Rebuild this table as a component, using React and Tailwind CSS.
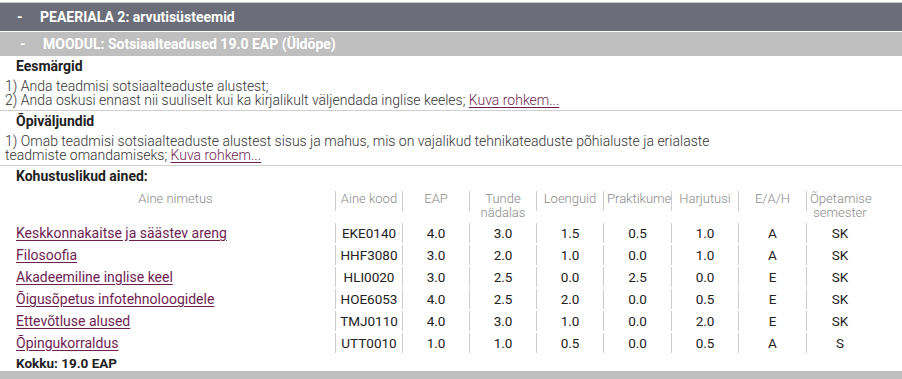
import React from "react";

const rows = [
  ["Keskkonnakaitse ja säästev areng", "EKE0140", "4.0", "3.0", "1.5", "0.5", "1.0", "A", "SK"],
  ["Filosoofia", "HHF3080", "3.0", "2.0", "1.0", "0.0", "1.0", "A", "SK"],
  ["Akadeemiline inglise keel", "HLI0020", "3.0", "2.5", "0.0", "2.5", "0.0", "E", "SK"],
  ["Õigusõpetus infotehnoloogidele", "HOE6053", "4.0", "2.5", "2.0", "0.0", "0.5", "E", "SK"],
  ["Ettevõtluse alused", "TMJ0110", "4.0", "3.0", "1.0", "0.0", "2.0", "E", "SK"],
  ["Õpingukorraldus", "UTT0010", "1.0", "1.0", "0.5", "0.0", "0.5", "A", "S"],
];

const heads = ["Aine kood", "EAP", "Tunde nädalas", "Loenguid", "Praktikume", "Harjutusi", "E/A/H", "Õpetamise semester"];
const widths = ["w-[67px]", "w-[67px]", "w-[67px]", "w-[67px]", "w-[68px]", "w-[67px]", "w-[68px]", "w-[67px]"];

function Link({ children }) {
  return <a href="#" className="text-[#6e1e52] underline underline-offset-[2px]">{children}</a>;
}

export default function App() {
  return (
    <div className="w-[902px] bg-white font-['Roboto',sans-serif] text-[14px] text-[#333]">
      <div className="h-[2px]" />
      <div className="h-[1px] bg-[#c8c8c8]" />
      <div className="h-[28px] bg-[#6b6e78] flex items-center text-white font-bold text-[14px] pl-[17px]">
        <span className="w-[23px]">-</span>
        <span>PEAERIALA 2: arvutisüsteemid</span>
      </div>
      <div className="h-[1px]" />
      <div className="h-[24px] bg-[#bfbfbf] flex items-center text-white font-bold text-[14px] pl-[20px]">
        <span className="w-[23px]">-</span>
        <span>MOODUL: Sotsiaalteadused 19.0 EAP (Üldõpe)</span>
      </div>

      <div className="pt-[2px] pb-[3px] border-b border-[#cfcfcf]">
        <div className="pl-[16px] font-bold leading-[16px] text-[#222]">Eesmärgid</div>
        <div className="mt-[5px] pl-[5px] leading-[14px] font-light text-[#333]">
          <div>1) Anda teadmisi sotsiaalteaduste alustest;</div>
          <div>
            2) Anda oskusi ennast nii suuliselt kui ka kirjalikult väljendada inglise keeles; <Link>Kuva rohkem...</Link>
          </div>
        </div>
      </div>

      <div className="pt-[2px] pb-[3px] border-b border-[#cfcfcf]">
        <div className="pl-[16px] font-bold leading-[16px] text-[#222]">Õpiväljundid</div>
        <div className="mt-[5px] pl-[5px] leading-[14px] font-light text-[#333] w-[735px]">
          1) Omab teadmisi sotsiaalteaduste alustest sisus ja mahus, mis on vajalikud tehnikateaduste põhialuste ja erialaste teadmiste omandamiseks; <Link>Kuva rohkem...</Link>
        </div>
      </div>

      <div className="pt-[2px]">
        <div className="pl-[16px] font-bold leading-[16px] text-[#222]">Kohustuslikud ained:</div>
        <table className="ml-[16px] mt-[5px] table-fixed w-[857px] border-separate border-spacing-x-0 border-spacing-y-[2px]">
          <colgroup>
            <col className="w-[319px]" />
            {widths.map((w, i) => (
              <col key={i} className={w} />
            ))}
          </colgroup>
          <thead>
            <tr>
              <th className="h-[30px] p-0 align-top font-light text-[13px] text-[#8a8a8a] leading-[14px] text-center">
                <div className="h-[20px] pt-[1px]">Aine nimetus</div>
              </th>
              {heads.map((h) => (
                <th key={h} className="h-[30px] p-0 align-top font-light text-[13px] text-[#8a8a8a] leading-[14px] text-center">
                  <div className="h-[20px] pt-[1px] border-l border-[#cccccc] px-[3px]">{h}</div>
                </th>
              ))}
            </tr>
          </thead>
          <tbody>
            {rows.map((r) => (
              <tr key={r[1]}>
                <td className="h-[20px] p-0 leading-[20px] text-left">
                  <Link>{r[0]}</Link>
                </td>
                {r.slice(1).map((c, i) => (
                  <td key={i} className="h-[20px] p-0 leading-[20px] text-center border-l border-[#cccccc] text-[#222] text-[13.5px]">
                    {c}
                  </td>
                ))}
              </tr>
            ))}
          </tbody>
        </table>
        <div className="pl-[16px] font-bold leading-[16px] text-[13.5px] text-[#222]">Kokku: 19.0 EAP</div>
      </div>
      <div className="h-[24px] bg-[#bfbfbf]" />
    </div>
  );
}
